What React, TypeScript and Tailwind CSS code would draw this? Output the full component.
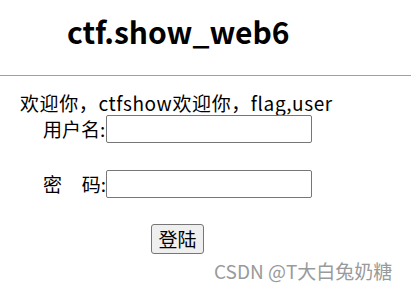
import React from 'react'

const cjk = "font-['Microsoft_YaHei','Noto_Sans_CJK_SC',sans-serif]"

export default function App() {
  return (
    <div className={`relative w-[411px] h-[290px] bg-white text-black overflow-hidden ${cjk}`}>
      <h1 className="pl-[67px] pt-[11px] h-[75px] text-[30px] font-bold leading-[40px]">ctf.show_web6</h1>
      <hr className="border-0 border-t border-[#a0a0a0]" />
      <p className="pl-[20px] pt-[14px] text-[19px] leading-[25px] tracking-[0.6px]">欢迎你，ctfshow欢迎你，flag,user</p>
      <form className="text-[19px]" onSubmit={(e) => e.preventDefault()}>
        <div className="flex items-center pl-[43px] h-[28px]">
          <span className="leading-[28px]">用户名:</span>
          <input
            type="text"
            className="ml-[1px] w-[206px] h-[28px] border border-[#767676] rounded-[2px] bg-white"
          />
        </div>
        <div className="flex items-center pl-[43px] mt-[27px] h-[28px]">
          <span className="leading-[28px] w-[63px] flex justify-between">
            <span>密</span>
            <span>码:</span>
          </span>
          <input
            type="password"
            className="w-[206px] h-[28px] border border-[#767676] rounded-[2px] bg-white"
          />
        </div>
        <div className="pl-[151px] mt-[26px]">
          <button
            type="submit"
            className="w-[53px] h-[30px] bg-[#efefef] border border-[#767676] rounded-[3px] text-[19px] leading-[26px]"
          >
            登陆
          </button>
        </div>
      </form>
      <div className="absolute left-[214px] top-[258px] text-[#9a9a9a] text-[19px] leading-[26px]">CSDN @T大白兔奶糖</div>
    </div>
  )
}
